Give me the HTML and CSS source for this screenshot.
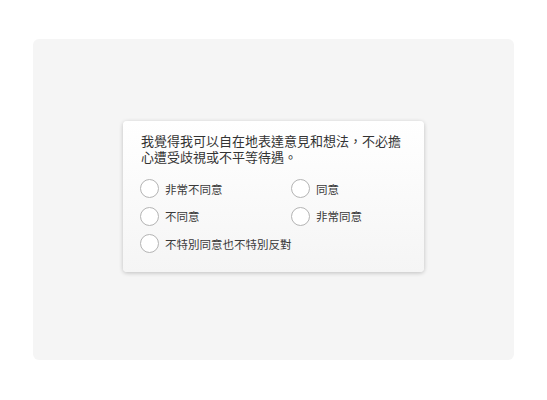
FILE: index.html
```html
<!DOCTYPE html>
<html lang="zh-Hant">
<head>
<meta charset="utf-8">
<link rel="stylesheet" href="styles.css">
</head>
<body>
<div class="stage">
  <form class="survey-card">
    <p class="question">我覺得我可以自在地表達意見和想法，不必擔心遭受歧視或不平等待遇。</p>
    <div class="options">
      <label class="option"><input type="radio" name="q1"><span class="dot"></span><span class="text">非常不同意</span></label>
      <label class="option"><input type="radio" name="q1"><span class="dot"></span><span class="text">同意</span></label>
      <label class="option"><input type="radio" name="q1"><span class="dot"></span><span class="text">不同意</span></label>
      <label class="option"><input type="radio" name="q1"><span class="dot"></span><span class="text">非常同意</span></label>
      <label class="option wide"><input type="radio" name="q1"><span class="dot"></span><span class="text">不特別同意也不特別反對</span></label>
    </div>
  </form>
</div>
</body>
</html>
```

FILE: styles.css
```css
html, body {
  margin: 0;
  background: #ffffff;
}

body {
  font-family: "Noto Sans CJK TC", "Noto Sans", sans-serif;
  color: #333333;
  padding: 39px 33px 40px;
}

.stage {
  width: 481px;
  height: 321px;
  box-sizing: border-box;
  background: #f5f5f5;
  border-radius: 6px;
  padding-top: 82px;
  display: flex;
  justify-content: center;
  align-items: flex-start;
}

.survey-card {
  width: 301px;
  box-sizing: border-box;
  padding: 12px 18px 14px 17px;
  background: linear-gradient(#ffffff, #f5f5f5);
  border-radius: 4px;
  box-shadow: 0 1px 4px rgba(0, 0, 0, 0.22);
  margin: 0;
}

.question {
  margin: 0 0 0 1px;
  font-size: 13px;
  line-height: 16px;
  color: #333333;
}

.options {
  margin-top: 10px;
  display: grid;
  grid-template-columns: 151px 1fr;
  grid-auto-rows: 27.5px;
}

.option {
  display: flex;
  align-items: center;
  gap: 6px;
  font-size: 11.5px;
  color: #3a3a3a;
  cursor: pointer;
}

.option.wide {
  grid-column: 1 / -1;
}

.option input {
  display: none;
}

.dot {
  width: 17px;
  height: 17px;
  border: 1.3px solid #b4b4b4;
  border-radius: 50%;
  background: #ffffff;
  flex: none;
}
```
